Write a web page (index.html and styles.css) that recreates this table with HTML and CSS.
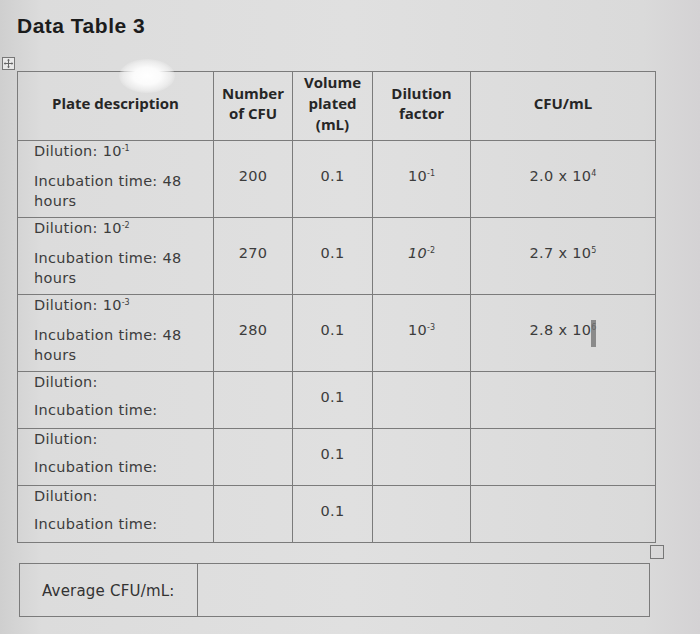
FILE: index.html
```html
<!DOCTYPE html>
<html>
<head>
<meta charset="utf-8">
<link rel="stylesheet" href="styles.css">
</head>
<body>
<div class="page">
  <h1 class="title">Data Table 3</h1>
  <div class="table-wrap">
    <div class="move-handle">
      <svg width="13" height="13" viewBox="0 0 13 13">
        <rect x="0.5" y="0.5" width="12" height="12" fill="#e8e8e8" stroke="#777"/>
        <path d="M6.5 2.5v8M2.5 6.5h8" stroke="#666" stroke-width="1"/>
        <path d="M6.5 1.8l-1.5 1.6h3zM6.5 11.2l-1.5-1.6h3zM1.8 6.5l1.6-1.5v3zM11.2 6.5l-1.6-1.5v3z" fill="#666"/>
      </svg>
    </div>
    <div class="glare"></div>
    <table class="data">
      <colgroup>
        <col class="c1"><col class="c2"><col class="c3"><col class="c4"><col class="c5">
      </colgroup>
      <thead>
        <tr class="head">
          <th>Plate description</th>
          <th>Number<br>of CFU</th>
          <th class="vol">Volume<br>plated<br>(mL)</th>
          <th>Dilution<br>factor</th>
          <th>CFU/mL</th>
        </tr>
      </thead>
      <tbody>
        <tr class="full">
          <td class="desc"><p>Dilution: 10<sup>-1</sup></p><p class="inc">Incubation time: 48 hours</p></td>
          <td class="num">200</td>
          <td class="num">0.1</td>
          <td class="num">10<sup>-1</sup></td>
          <td class="num">2.0 x 10<sup>4</sup></td>
        </tr>
        <tr class="full">
          <td class="desc"><p>Dilution: 10<sup>-2</sup></p><p class="inc">Incubation time: 48 hours</p></td>
          <td class="num">270</td>
          <td class="num">0.1</td>
          <td class="num"><i>10</i><sup>-2</sup></td>
          <td class="num">2.7 x 10<sup>5</sup></td>
        </tr>
        <tr class="full">
          <td class="desc"><p>Dilution: 10<sup>-3</sup></p><p class="inc">Incubation time: 48 hours</p></td>
          <td class="num">280</td>
          <td class="num">0.1</td>
          <td class="num">10<sup>-3</sup></td>
          <td class="num">2.8 x 10<sup class="sel">6</sup></td>
        </tr>
        <tr class="empty">
          <td class="desc"><p>Dilution:</p><p class="inc2">Incubation time:</p></td>
          <td></td>
          <td class="num">0.1</td>
          <td></td>
          <td></td>
        </tr>
        <tr class="empty">
          <td class="desc"><p>Dilution:</p><p class="inc2">Incubation time:</p></td>
          <td></td>
          <td class="num">0.1</td>
          <td></td>
          <td></td>
        </tr>
        <tr class="empty">
          <td class="desc"><p>Dilution:</p><p class="inc2">Incubation time:</p></td>
          <td></td>
          <td class="num">0.1</td>
          <td></td>
          <td></td>
        </tr>
      </tbody>
    </table>
    <div class="resize-handle"></div>
    <table class="avg">
      <tr>
        <td class="avg-label">Average CFU/mL:</td>
        <td class="avg-value"></td>
      </tr>
    </table>
  </div>
</div>
</body>
</html>
```

FILE: styles.css
```css
html, body {
  margin: 0;
  padding: 0;
}
body {
  width: 700px;
  height: 634px;
  overflow: hidden;
  background: linear-gradient(90deg, #cfcfcf 0%, #dcdcdc 6%, #e0e0e0 50%, #dadada 92%, #d4d2d4 100%);
  font-family: "DejaVu Sans", "Open Sans", sans-serif;
  color: #333;
}
.page {
  padding: 13px 0 0 17px;
}
.title {
  margin: 0;
  font-family: "Liberation Sans", Arial, sans-serif;
  font-weight: bold;
  font-size: 21px;
  line-height: 26px;
  color: #1c1c1c;
  letter-spacing: 0.5px;
}
.table-wrap {
  position: relative;
  margin-top: 32px;
  width: 650px;
}
.move-handle {
  position: absolute;
  left: -15px;
  top: -14px;
  width: 13px;
  height: 13px;
  line-height: 0;
}
.glare {
  position: absolute;
  left: 102px;
  top: -12px;
  width: 56px;
  height: 34px;
  border-radius: 50%;
  background: radial-gradient(ellipse at center, #ffffff 0%, #fbfbfb 35%, rgba(245,245,245,0.6) 60%, rgba(230,230,230,0) 75%);
  pointer-events: none;
}
.data, .avg {
  border-collapse: collapse;
  table-layout: fixed;
}
.data {
  width: 638px;
}
.data td, .data th {
  border: 1px solid #7b7b7b;
  padding: 0;
}
col.c1 { width: 196px; }
col.c2 { width: 79px; }
col.c3 { width: 80px; }
col.c4 { width: 98px; }
col.c5 { width: 185px; }
.head {
  height: 69px;
}
.head th {
  font-family: "Open Sans", "DejaVu Sans", sans-serif;
  font-size: 15px;
  font-weight: bold;
  line-height: 20px;
  color: #262626;
  text-align: center;
  vertical-align: middle;
  padding-bottom: 6px;
}
.head th.vol {
  line-height: 21px;
  padding-bottom: 5px;
}
.full { height: 77px; }
.empty { height: 57px; }
.desc {
  vertical-align: top;
  padding-left: 16px !important;
  padding-right: 6px !important;
  font-size: 14.5px;
  letter-spacing: 0.3px;
  line-height: 20px;
  color: #3c3c3c;
}
.desc p {
  margin: 0;
}
.desc .inc {
  margin-top: 10px;
}
.desc .inc2 {
  margin-top: 8px;
}
.num {
  text-align: center;
  vertical-align: middle;
  font-size: 14.5px;
  letter-spacing: 0.3px;
  line-height: 20px;
  color: #3c3c3c;
  padding-bottom: 6px !important;
}
.num i {
  font-style: italic;
}
sup {
  font-size: 8px;
  line-height: 0;
  vertical-align: 5px;
  letter-spacing: 0;
}
sup.sel {
  background: #8a8a8a;
  color: #666;
  padding: 3px 0 15px 0;
}
.resize-handle {
  position: absolute;
  left: 633px;
  top: 474px;
  width: 14px;
  height: 14px;
  border: 1px solid #777;
  box-sizing: border-box;
}
.avg {
  margin-top: 20px;
  margin-left: 2px;
  width: 631px;
}
.avg td {
  border: 1px solid #7b7b7b;
  height: 52px;
  padding: 0;
}
.avg-label {
  width: 178px;
  padding-left: 22px !important;
  box-sizing: border-box;
  font-size: 15px;
  letter-spacing: 0.2px;
  color: #333;
  vertical-align: middle;
  padding-top: 2px !important;
}
```
